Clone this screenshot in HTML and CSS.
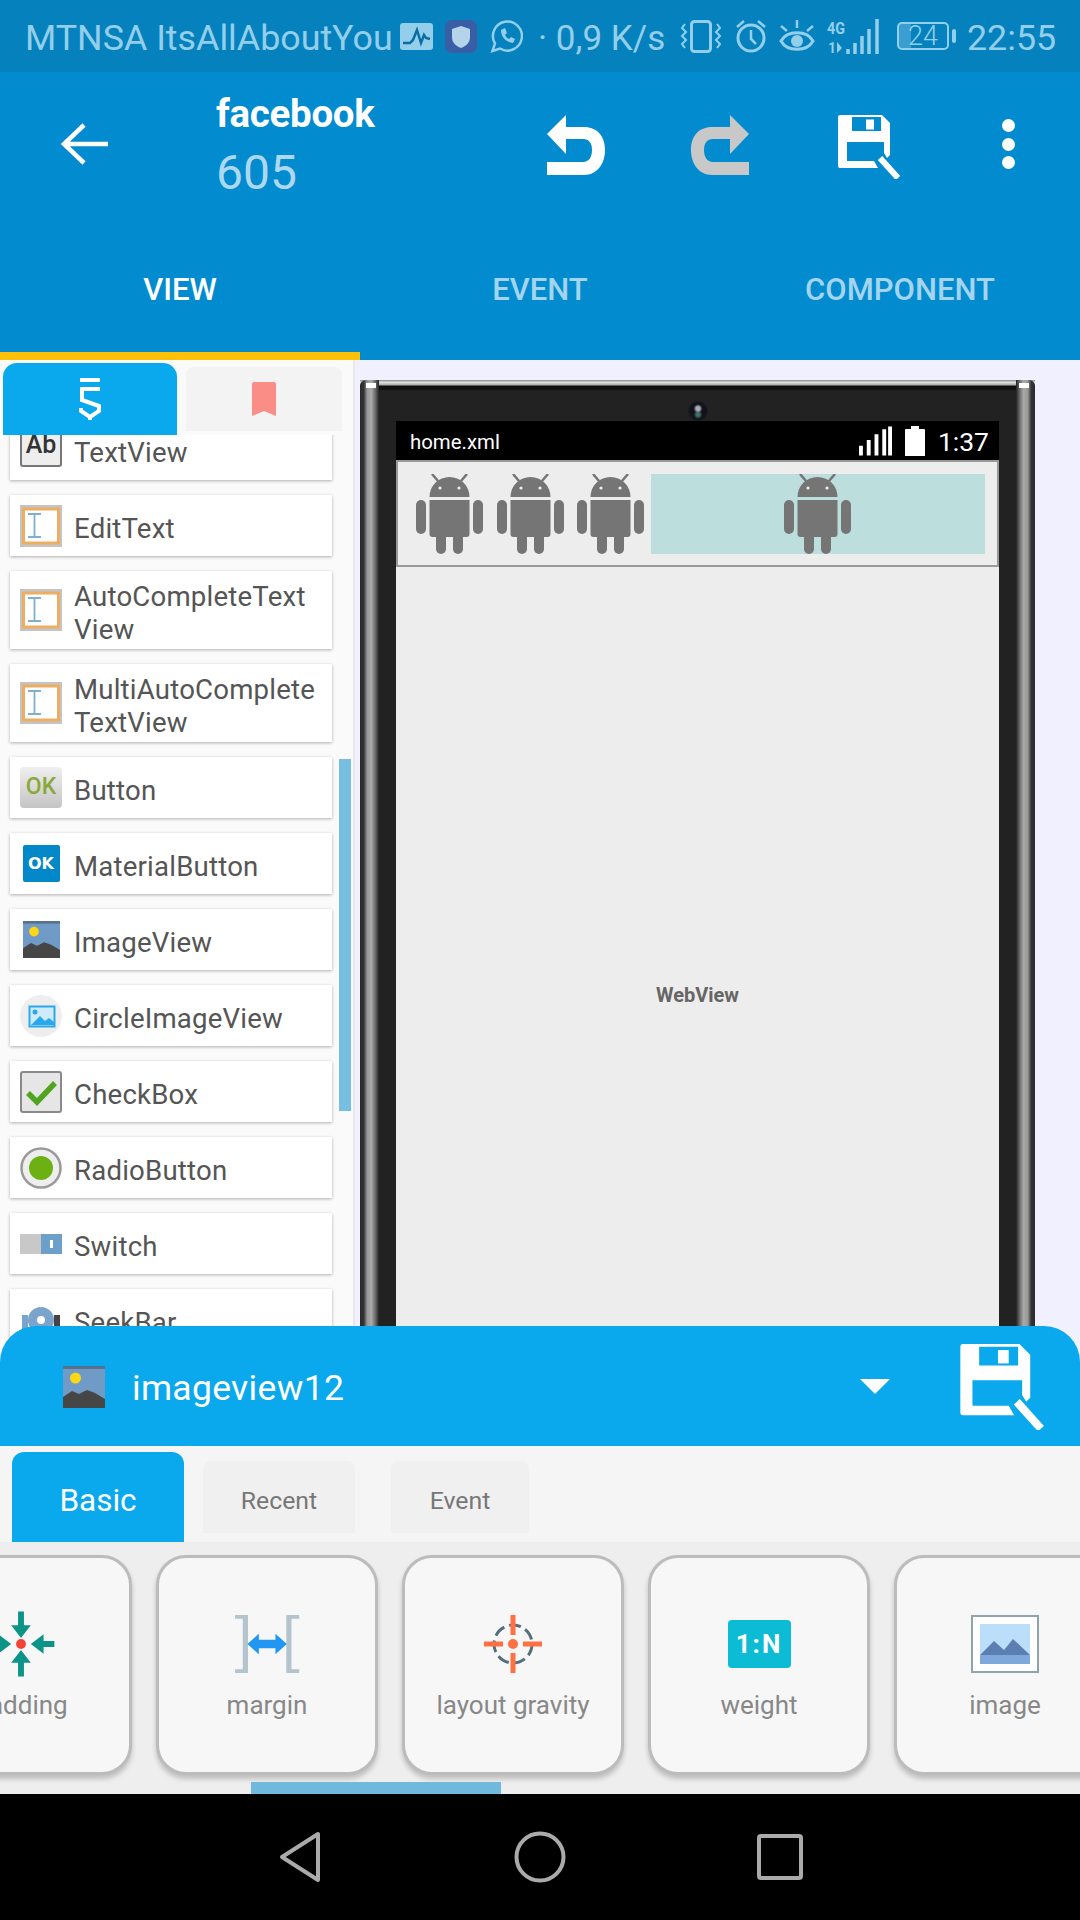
FILE: index.html
```html
<!DOCTYPE html>
<html lang="en">
<head>
<meta charset="utf-8">
<title>Sketchware view editor</title>
<link rel="stylesheet" href="styles.css">
</head>
<body>
<svg class="defs" width="0" height="0" aria-hidden="true">
  <defs>
    <symbol id="android" viewBox="0 0 67 80">
      <path d="M16 0l6 7M51 0l-6 7" stroke="#757575" stroke-width="2.5" fill="none"/>
      <path d="M13.5 23a20 20 0 0 1 40 0z" fill="#757575"/>
      <circle cx="24" cy="14" r="1.6" fill="#eee"/><circle cx="43" cy="14" r="1.6" fill="#eee"/>
      <path d="M13.5 26h40v34a3 3 0 0 1-3 3h-34a3 3 0 0 1-3-3z" fill="#757575"/>
      <rect x="0" y="26" width="10" height="34" rx="5" fill="#757575"/>
      <rect x="57" y="26" width="10" height="34" rx="5" fill="#757575"/>
      <rect x="20" y="55" width="10" height="25" rx="5" fill="#757575"/>
      <rect x="37" y="55" width="10" height="25" rx="5" fill="#757575"/>
    </symbol>
    <symbol id="save" viewBox="0 0 62 64">
      <path fill-rule="evenodd" d="M2 0H44l8 8v32l-3 3-3-5V27H9v19h27l4 7H2a2 2 0 0 1-2-2V2a2 2 0 0 1 2-2zM14 2v14h29V2z" fill="#fff"/>
      <rect x="28" y="4.500" width="8" height="10" fill="#fff"/>
      <path d="M42 43l18 20" stroke="#fff" stroke-width="6" fill="none"/>
    </symbol>
    <symbol id="cursor" viewBox="0 0 42 42">
      <rect width="42" height="42" fill="#c4c4c4"/>
      <rect x="3.500" y="4" width="35" height="34" fill="#fff" stroke="#eeae62" stroke-width="3"/>
      <path d="M8 9h13M8 32h13M14.500 9v23" stroke="#7fb0d2" stroke-width="1.800" fill="none"/>
    </symbol>
    <symbol id="picture" viewBox="0 0 42 42">
      <rect width="42" height="42" fill="#6f9bc6"/>
      <rect width="42" height="3" fill="#55738f"/>
      <circle cx="12.500" cy="12" r="5.500" fill="#fbd716"/>
      <path d="M0 31l9-6 7 3 8-4 8 3 10 6v9H0z" fill="#464646"/>
    </symbol>
  </defs>
</svg>

<div class="device">
  <header class="status">
    <span class="carrier">MTNSA ItsAllAboutYou</span>
    <svg class="si-pulse" viewBox="0 0 33 27"><rect width="33" height="27" rx="3" fill="#93cfea"/><path d="M3 20h7l3-3 4-10 4 13 3-8 2 3 4 1" stroke="#0a6ea3" stroke-width="2.500" fill="none"/></svg>
    <svg class="si-shield" viewBox="0 0 32 33"><rect width="32" height="33" rx="7" fill="#3a5ea6"/><path d="M16 6l9 3v8c0 6-4 9-9 11-5-2-9-5-9-11V9z" fill="#b5d4ea"/></svg>
    <svg class="si-wa" viewBox="0 0 33 33"><path d="M2.500 31l2.500-7.500A14.500 14.500 0 1 1 10 28.500z" fill="none" stroke="#93cfea" stroke-width="2.500"/><path d="M11 10c0 7 5 12 12 13l2-4-4-2-2 2c-2-1-3-2-4-4l2-2-2-5z" fill="#93cfea"/></svg>
    <span class="speed">· 0,9 K/s</span>
    <svg class="si-vib" viewBox="0 0 42 33"><rect x="11.500" y="1.500" width="19" height="30" rx="3" fill="none" stroke="#93cfea" stroke-width="3"/><path d="M5 4L2 8l4 4-4 4 4 4-4 4 3 4M37 4l3 4-4 4 4 4-4 4 4 4-3 4" fill="none" stroke="#93cfea" stroke-width="2"/></svg>
    <svg class="si-alarm" viewBox="0 0 32 33"><circle cx="16" cy="18" r="13" fill="none" stroke="#93cfea" stroke-width="3"/><path d="M16 10v9l5 5M2 7l7-6M30 7l-7-6" fill="none" stroke="#93cfea" stroke-width="2.500"/></svg>
    <svg class="si-eye" viewBox="0 0 36 33"><path d="M2 21c6-11 26-11 32 0-6 11-26 11-32 0z" fill="none" stroke="#93cfea" stroke-width="3"/><circle cx="18" cy="21" r="6" fill="#93cfea"/><path d="M8 11L2 6M28 11l6-5M18 8V0" stroke="#93cfea" stroke-width="2.500"/></svg>
    <svg class="si-sig" viewBox="0 0 54 35">
      <text x="0" y="15" class="si-4g" textLength="18" lengthAdjust="spacingAndGlyphs">4G</text>
      <text x="1" y="34" class="si-1">1</text>
      <path d="M10 23v11l5-5z" fill="#93cfea"/>
      <path d="M21 35v-5M28 35V24M35 35V17M42 35V10M50 35V0" stroke="#93cfea" stroke-width="3.500"/>
    </svg>
    <span class="battery"><span class="battery-num">24</span></span>
    <span class="clock">22:55</span>
  </header>

  <section class="appbar">
    <div class="appbar-top">
      <svg class="ic-back" viewBox="0 0 48 44"><path d="M24 3L4 22l20 19M4 22h44" fill="none" stroke="#fff" stroke-width="4.500"/></svg>
      <div class="title">
        <div class="title-main">facebook</div>
        <div class="title-sub">605</div>
      </div>
      <svg class="ic-undo" viewBox="0 0 60 60"><path d="M1 19L20 0v12h18c13 0 21 9 21 23 0 14-8 25-21 25H1V47h36c6 0 9-5 9-12s-3-11-9-11H20v15z" fill="#fff"/></svg>
      <svg class="ic-redo" viewBox="0 0 60 60"><path d="M59 19L40 0v12H22C9 12 1 21 1 35c0 14 8 25 21 25h37V47H23c-6 0-9-5-9-12s3-11 9-11h17v15z" fill="#c8c8c8"/></svg>
      <svg class="ic-save"><use href="#save"/></svg>
      <div class="dots"><i></i><i></i><i></i></div>
    </div>
    <nav class="tabs">
      <div class="tab tab-on">VIEW</div>
      <div class="tab">EVENT</div>
      <div class="tab">COMPONENT</div>
    </nav>
  </section>

  <main class="workspace">
    <aside class="palette">
      <div class="pal-tabs">
        <div class="pal-tab pal-tab-on">
          <svg class="pal-logo" viewBox="0 0 22 42"><path d="M1 2h20" stroke="#fff" stroke-width="4"/><path d="M21 11H3v11l17 6v5l-9 6-9-6v-3M11 38v4" fill="none" stroke="#fff" stroke-width="4"/></svg>
        </div>
        <div class="pal-tab">
          <svg class="pal-mark" viewBox="0 0 24 34"><path d="M0 2a2 2 0 0 1 2-2h20a2 2 0 0 1 2 2v32l-12-5-12 5z" fill="#fa8d85"/></svg>
        </div>
      </div>
      <div class="pal-scroll">
        <div class="pal-list">
          <div class="item">
            <span class="ab">Ab</span>
            <span class="label">TextView</span>
          </div>
          <div class="item"><svg class="ico"><use href="#cursor"/></svg><span class="label">EditText</span></div>
          <div class="item item-tall"><svg class="ico"><use href="#cursor"/></svg><span class="label">AutoCompleteText<br>View</span></div>
          <div class="item item-tall"><svg class="ico"><use href="#cursor"/></svg><span class="label">MultiAutoComplete<br>TextView</span></div>
          <div class="item"><span class="okbtn">OK</span><span class="label">Button</span></div>
          <div class="item"><span class="okmat">OK</span><span class="label">MaterialButton</span></div>
          <div class="item"><svg class="ico-pic"><use href="#picture"/></svg><span class="label">ImageView</span></div>
          <div class="item">
            <svg class="ico" viewBox="0 0 42 42"><circle cx="21" cy="21" r="21" fill="#eee"/><rect x="9.500" y="11.500" width="25" height="20" fill="#cfeafb" stroke="#29a9ec" stroke-width="2"/><circle cx="15" cy="17" r="2.500" fill="#29a9ec"/><path d="M11 30l9-9 5 5 4-3 5 4v3z" fill="#29a9ec"/></svg>
            <span class="label">CircleImageView</span>
          </div>
          <div class="item">
            <svg class="ico" viewBox="0 0 42 42"><rect x="1" y="1" width="40" height="40" rx="2" fill="#e6e6e6" stroke="#8a8a8a" stroke-width="2"/><path d="M8 22l9 9L35 12" fill="none" stroke="#4fa51d" stroke-width="5.500"/></svg>
            <span class="label">CheckBox</span>
          </div>
          <div class="item">
            <svg class="ico" viewBox="0 0 42 42"><circle cx="21" cy="21" r="19.500" fill="#eee" stroke="#999" stroke-width="2.500"/><circle cx="21" cy="21" r="12" fill="#6db013"/></svg>
            <span class="label">RadioButton</span>
          </div>
          <div class="item">
            <svg class="ico" viewBox="0 0 42 42"><rect y="11" width="22" height="20" fill="#c8c8c8"/><rect x="21" y="11" width="21" height="20" fill="#6c9fca"/><rect x="30" y="17" width="3" height="8" fill="#fff"/></svg>
            <span class="label">Switch</span>
          </div>
          <div class="item">
            <svg class="ico" viewBox="0 0 42 42"><circle cx="21" cy="21" r="13" fill="#7ba4cc"/><circle cx="21" cy="21" r="4" fill="#fff"/><rect x="2" y="16" width="6" height="14" fill="#7ba4cc"/><rect x="34" y="16" width="6" height="14" fill="#444"/></svg>
            <span class="label">SeekBar</span>
          </div>
        </div>
        <div class="pal-thumb"></div>
      </div>
    </aside>

    <section class="stage">
      <div class="phone">
        <div class="phone-head"><span class="camera"></span></div>
        <div class="screen">
          <div class="sbar">
            <span class="sbar-file">home.xml</span>
            <svg class="sbar-sig" viewBox="0 0 34 30"><path d="M2 30V20M10 30V14M18 30V8M26 30V3M32 30V0" stroke="#fff" stroke-width="4"/></svg>
            <svg class="sbar-bat" viewBox="0 0 20 30"><path d="M6 0h8v3h5a1 1 0 0 1 1 1v26H0V4a1 1 0 0 1 1-1h5z" fill="#fff"/></svg>
            <span class="sbar-time">1:37</span>
          </div>
          <div class="row">
            <svg class="droid"><use href="#android"/></svg>
            <svg class="droid"><use href="#android"/></svg>
            <svg class="droid"><use href="#android"/></svg>
            <div class="selected"><svg class="droid"><use href="#android"/></svg></div>
          </div>
          <div class="webview">WebView</div>
        </div>
      </div>
    </section>
  </main>

  <section class="sheet">
    <div class="sheet-head">
      <svg class="sheet-pic"><use href="#picture"/></svg>
      <span class="sheet-name">imageview12</span>
      <span class="caret"></span>
      <svg class="sheet-save"><use href="#save"/></svg>
    </div>
    <div class="sheet-tabs">
      <div class="stab stab-on">Basic</div>
      <div class="stab stab-recent">Recent</div>
      <div class="stab stab-event">Event</div>
    </div>
    <div class="props">
      <div class="prop prop-cut">
        <svg class="pi" viewBox="0 0 220 66">
          <g fill="#0d9488">
            <path d="M107 0h6v14h7l-10 13-10-13h7z"/>
            <path d="M107 66h6V52h7l-10-13-10 13h7z"/>
            <path d="M144 30v6h-11v7l-13-10 13-10v7z"/>
            <path d="M76 30v6h11v7l13-10-13-10v7z"/>
          </g>
          <circle cx="110" cy="33" r="5" fill="#f44336"/>
        </svg>
        <span class="prop-label">padding</span>
      </div>
      <div class="prop">
        <svg class="pi" viewBox="0 0 64 56"><path d="M1 1h10v54H1M63 1H53v54h10" fill="none" stroke="#b4c4cd" stroke-width="5"/><path d="M13 28l11-10v6h16v-6l11 10-11 10v-6H24v6z" fill="#2196f3"/></svg>
        <span class="prop-label">margin</span>
      </div>
      <div class="prop">
        <svg class="pi" viewBox="0 0 58 58"><circle cx="29" cy="29" r="19" fill="none" stroke="#546e7a" stroke-width="3" stroke-dasharray="12 5"/><circle cx="29" cy="29" r="5" fill="#ff7043"/><path d="M29 0v20M29 38v20M0 29h19M39 29h19" stroke="#ff7043" stroke-width="5"/></svg>
        <span class="prop-label">layout gravity</span>
      </div>
      <div class="prop">
        <span class="ratio">1:N</span>
        <span class="prop-label">weight</span>
      </div>
      <div class="prop">
        <svg class="pi" viewBox="0 0 68 58"><rect x="1" y="1" width="66" height="56" fill="#fff" stroke="#90a4ae" stroke-width="2"/><rect x="9" y="9" width="50" height="40" fill="#bbdefb"/><path d="M9 40l14-14 10 9 9-11 17 16v9H9z" fill="#5a7fb0"/><rect x="9" y="40" width="50" height="9" fill="#7fa8dc"/></svg>
        <span class="prop-label">image</span>
      </div>
      <div class="props-thumb"></div>
    </div>
  </section>

  <footer class="navbar">
    <svg class="nav-back" viewBox="0 0 44 52"><path d="M40 3v46L4 26z" fill="none" stroke="#aaa" stroke-width="4" stroke-linejoin="round"/></svg>
    <svg class="nav-home" viewBox="0 0 52 52"><circle cx="26" cy="26" r="23.500" fill="none" stroke="#aaa" stroke-width="4"/></svg>
    <svg class="nav-recent" viewBox="0 0 46 46"><rect x="2" y="2" width="42" height="42" rx="2" fill="none" stroke="#aaa" stroke-width="4"/></svg>
  </footer>
</div>
</body>
</html>
```

FILE: styles.css
```css
* { box-sizing: border-box; }
html, body { margin: 0; padding: 0; }
body { width: 1080px; height: 1920px; overflow: hidden; font-family: Roboto, "Liberation Sans", sans-serif; background: #000; }
.defs { position: absolute; }
svg { display: block; flex: none; }

.device { width: 1080px; height: 1920px; display: flex; flex-direction: column; overflow: hidden; }

/* status bar */
.status { height: 72px; flex: none; background: #0582be; color: #93cfea; display: flex; align-items: center; padding: 0 0 0 25px; font-size: 35.800px; font-weight: 400; }
.carrier { width: 368px; white-space: nowrap; flex: none; padding-top: 4px; }
.si-pulse { width: 33px; height: 27px; margin-left: 7px; }
.si-shield { width: 32px; height: 33px; margin-left: 12px; }
.si-wa { width: 33px; height: 33px; margin-left: 13px; }
.speed { width: 130px; margin-left: 15px; margin-right: 2px; white-space: nowrap; flex: none; font-size: 35px; padding-top: 4px; }
.si-vib { width: 42px; height: 33px; margin-left: 10px; }
.si-alarm { width: 32px; height: 33px; margin-left: 13px; }
.si-eye { width: 36px; height: 33px; margin-left: 12px; }
.si-sig { width: 54px; height: 35px; margin-left: 12px; }
.si-4g { font-size: 17px; font-weight: 700; fill: #93cfea; }
.si-1 { font-size: 14px; font-weight: 700; fill: #93cfea; }
.battery { width: 52px; height: 28px; margin-left: 16px; border: 2px solid #93cfea; border-radius: 5px; display: flex; align-items: center; justify-content: center; position: relative; font-size: 27px; font-weight: 300; flex: none; background: linear-gradient(90deg, #3a9fd0 24%, transparent 24%); }
.battery::after { content: ""; position: absolute; right: -9px; top: 5px; width: 4px; height: 14px; border-radius: 2px; background: #93cfea; }
.battery-num { line-height: 1; }
.clock { margin-left: 18px; white-space: nowrap; padding-top: 4px; }

/* app bar */
.appbar { height: 288px; flex: none; background: #028ccf; display: flex; flex-direction: column; }
.appbar-top { height: 178px; display: flex; align-items: center; flex: none; padding-left: 60px; }
.ic-back { width: 48px; height: 44px; margin-top: -34px; }
.title { width: 330px; margin-left: 108px; margin-top: -31px; flex: none; }
.title-main { font-size: 38.500px; font-weight: 700; color: #fff; line-height: 46px; letter-spacing: -.3px; }
.title-sub { font-size: 48px; font-weight: 400; color: #add8ef; line-height: 56px; margin-top: 8px; }
.ic-undo { width: 60px; height: 60px; margin-top: -32px; }
.ic-redo { width: 60px; height: 60px; margin-left: 84px; margin-top: -32px; }
.ic-save { width: 62px; height: 64px; margin-left: 88px; margin-top: -28px; }
.dots { margin-left: 102px; margin-top: -34px; display: flex; flex-direction: column; gap: 5.500px; }
.dots i { display: block; width: 13px; height: 13px; border-radius: 50%; background: #fff; }
.tabs { flex: 1; display: flex; }
.tab { width: 360px; position: relative; text-align: center; font-size: 31px; font-weight: 500; color: #a4d4ee; line-height: 80px; }
.tab-on { color: #fff; }
.tab-on::after { content: ""; position: absolute; left: 0; right: 0; bottom: 0; height: 8px; background: #ffc107; }

/* workspace */
.workspace { height: 1002px; flex: none; display: flex; overflow: hidden; background: #f0f0fe; }
.palette { width: 355px; flex: none; background: #fafafa; border-right: 2px solid #e8e8e8; display: flex; flex-direction: column; padding-top: 3px; }
.pal-tabs { height: 72px; flex: none; display: flex; align-items: center; gap: 9px; padding-left: 3px; position: relative; z-index: 1; }
.pal-tab { width: 156px; height: 64px; background: #f3f3f3; border-radius: 8px 8px 0 0; display: flex; align-items: center; justify-content: center; }
.pal-tab-on { width: 174px; height: 72px; background: #0aa8ec; border-radius: 14px 14px 0 0; }
.pal-logo { width: 22px; height: 42px; }
.pal-mark { width: 24px; height: 34px; }
.pal-scroll { flex: 1; position: relative; overflow: hidden; }
.pal-list { display: flex; flex-direction: column; gap: 15px; padding-left: 10px; margin-top: -16px; }
.item { width: 322px; height: 61px; flex: none; background: #fff; box-shadow: 0 1px 3px rgba(0,0,0,.3); display: flex; align-items: center; padding-left: 10px; color: #555; }
.item-tall { height: 78px; }
.label { margin-left: 12px; padding-top: 5px; font-size: 27.600px; line-height: 33px; letter-spacing: .2px; white-space: nowrap; }
.ico { width: 42px; height: 42px; }
.ico-pic { width: 37px; height: 37px; margin: 0 2.500px; }
.ab { width: 42px; height: 42px; flex: none; background: #eee; border: 2px solid #777; border-radius: 3px; color: #333; font-size: 25px; font-weight: 500; text-align: center; line-height: 36px; margin-top: -7px; }
.okbtn { width: 42px; height: 41px; flex: none; border-radius: 4px; background: linear-gradient(#efefef, #c4c4c4); color: #8aa83c; font-size: 23px; font-weight: 500; text-align: center; line-height: 40px; }
.okmat { width: 37px; height: 37px; margin: 0 2.500px; flex: none; background: #0288c9; color: #fff; font-family: "DejaVu Sans", sans-serif; font-size: 16px; font-weight: 700; text-align: center; line-height: 37px; border-radius: 2px; }
.pal-thumb { position: absolute; left: 339px; top: 324px; width: 12px; height: 352px; background: #78bee0; }

/* phone */
.stage { flex: 1; padding: 20px 0 0 5px; }
.phone { width: 675px; height: 1100px; background: #222; border-radius: 6px 6px 0 0; padding: 0 36px; position: relative; }
.phone::before, .phone::after { content: ""; position: absolute; top: 0; bottom: 0; width: 19px; }
.phone::before { left: 0; border-top-left-radius: 6px; background: linear-gradient(#fff, #fff) 6px 3px / 10px 5px no-repeat, linear-gradient(90deg, #2a2a2a, #333 20%, #999 38%, #aaa 60%, #666 82%, #222); }
.phone::after { right: 0; border-top-right-radius: 6px; background: linear-gradient(#fff, #fff) 3px 3px / 10px 5px no-repeat, linear-gradient(270deg, #2a2a2a, #333 20%, #999 38%, #aaa 60%, #666 82%, #222); }
.phone-head { height: 41px; display: flex; justify-content: center; align-items: flex-end; margin: 0 -36px; background: linear-gradient(#999 0, #999 1px, #e6e6e6 2px, #aaa 5px, #0e0e0e 6px, #111 9px, #222 11px); }
.camera { width: 20px; height: 20px; border-radius: 50%; background: radial-gradient(circle at 50% 38%, #aab 0, #aab 12%, transparent 28%), radial-gradient(circle at 50% 68%, #3f6f60 0, #3f6f60 10%, transparent 26%), radial-gradient(#10131a 55%, #2c2c2c 100%); }
.screen { width: 603px; background: #ededed; height: 1100px; }
.sbar { height: 39px; background: #000; color: #fff; display: flex; align-items: center; padding: 0 10px 0 14px; }
.sbar-file { font-size: 20.400px; flex: 1; padding-top: 2px; }
.sbar-sig { width: 33px; height: 30px; }
.sbar-bat { width: 20px; height: 30px; margin-left: 13px; }
.sbar-time { font-size: 26.500px; margin-left: 13px; padding-top: 2px; }
.row { height: 107px; display: flex; align-items: center; padding: 0 12px 0 18px; border: 2px solid #999; gap: 13.500px; }
.droid { width: 67px; height: 80px; }
.selected { flex: 1; height: 80px; background: #bcdedc; display: flex; justify-content: center; margin-left: -7px; }
.webview { height: 800px; text-align: center; font-size: 20px; font-weight: 700; color: #666; padding-top: 407px; line-height: 42px; }

/* bottom sheet */
.sheet { margin-top: -36px; position: relative; flex: none; display: flex; flex-direction: column; }
.sheet-head { height: 120px; background: #0aa8ec; border-radius: 36px 36px 0 0; display: flex; align-items: center; padding-left: 63px; }
.sheet-pic { width: 42px; height: 42px; margin-top: 1px; }
.sheet-name { font-size: 35.500px; color: #fff; margin-left: 27px; flex: 1; letter-spacing: .3px; padding-top: 4px; }
.caret { width: 0; height: 0; border-left: 15px solid transparent; border-right: 15px solid transparent; border-top: 15px solid #fff; }
.sheet-save { width: 84px; height: 86px; margin-left: 70px; margin-right: 36px; margin-top: 2px; }
.sheet-tabs { height: 96px; background: #f5f5f5; position: relative; display: flex; align-items: flex-end; padding-left: 12px; }
.stab { height: 72px; margin-bottom: 9px; background: #f0f0f0; color: #777; font-size: 24.800px; text-align: center; line-height: 79px; border-radius: 8px 8px 0 0; }
.stab-on { width: 172px; height: 90px; margin-bottom: 0; background: #0aa8ec; color: #fff; font-size: 31.500px; line-height: 98px; border-radius: 12px 12px 0 0; }
.stab-recent { width: 152px; margin-left: 19px; }
.stab-event { width: 138px; margin-left: 36px; }
.props { height: 252px; background: #eee; position: relative; display: flex; gap: 24px; padding: 13px 0 0; overflow: hidden; }
.prop { width: 222px; height: 220px; flex: none; background: #f7f7f7; border: 3px solid #bcbcbc; border-radius: 30px; box-shadow: 0 4px 5px rgba(0,0,0,.2); display: flex; flex-direction: column; align-items: center; padding-top: 53px; }
.prop-cut { margin-left: -90px; }
.pi { height: 66px; max-width: 100%; }
.prop:not(.prop-cut) .pi { height: 58px; margin-top: 4px; margin-bottom: 4px; }
.ratio { width: 63px; height: 48px; margin: 9px 0; flex: none; background: #0bbcd4; border-radius: 4px; color: #fff; font-size: 26px; font-weight: 700; letter-spacing: 2px; text-align: center; line-height: 48px; }
.prop-label { font-size: 26px; color: #888; line-height: 34px; margin-top: 11px; white-space: nowrap; }
.props-thumb { position: absolute; left: 251px; bottom: 0; width: 250px; height: 12px; background: #6fb9dc; }

/* navigation */
.navbar { flex: 1; background: #000; display: flex; align-items: center; padding-left: 278px; }
.nav-back { width: 44px; height: 52px; }
.nav-home { width: 52px; height: 52px; margin-left: 192px; }
.nav-recent { width: 46px; height: 46px; margin-left: 191px; }
```
